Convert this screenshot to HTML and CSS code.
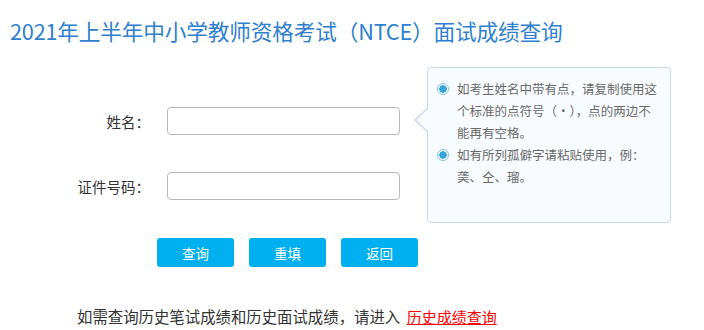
FILE: index.html
```html
<!DOCTYPE html>
<html lang="zh-CN">
<head>
<meta charset="utf-8">
<title>2021年上半年中小学教师资格考试（NTCE）面试成绩查询</title>
<link rel="stylesheet" href="styles.css">
</head>
<body>
<h1 class="title">2021年上半年中小学教师资格考试（NTCE）面试成绩查询</h1>
<div class="content">
  <div class="form">
    <div class="row">
      <label class="label">姓名：</label>
      <input class="field" type="text">
    </div>
    <div class="row">
      <label class="label">证件号码：</label>
      <input class="field" type="text">
    </div>
  </div>
  <div class="tip">
    <div class="tip-item"><span class="dot"></span><p class="tip-text">如考生姓名中带有点，请复制使用这个标准的点符号（·），点的两边不能再有空格。</p></div>
    <div class="tip-item"><span class="dot"></span><p class="tip-text">如有所列孤僻字请粘贴使用，例：䶮、仝、瑠。</p></div>
  </div>
</div>
<div class="buttons">
  <button class="btn" type="button">查询</button>
  <button class="btn" type="button">重填</button>
  <button class="btn" type="button">返回</button>
</div>
<p class="history">如需查询历史笔试成绩和历史面试成绩，请进入 <a class="history-link" href="#">历史成绩查询</a></p>
</body>
</html>
```
FILE: styles.css
```css
html, body {
  margin: 0;
  padding: 0;
  background: #ffffff;
}
body {
  font-family: "Noto Sans CJK SC", "Noto Sans", sans-serif;
  color: #333333;
}
.title {
  margin: 16px 0 0 10px;
  font-size: 21.7px;
  line-height: 30px;
  font-weight: normal;
  color: #2e7fd0;
  letter-spacing: -0.2px;
}
.content {
  display: flex;
  align-items: flex-start;
  margin-top: 21px;
}
.form {
  display: flex;
  flex-direction: column;
  gap: 37px;
  padding-top: 40px;
  width: 400px;
}
.row {
  display: flex;
  align-items: center;
}
.label {
  width: 150px;
  text-align: right;
  font-size: 14.5px;
  color: #333333;
  margin-right: 17px;
}
.field {
  box-sizing: border-box;
  width: 233px;
  height: 28px;
  margin: 0;
  border: 1px solid #b9b9b9;
  border-radius: 4px;
  background: #ffffff;
  padding: 0 6px;
  outline: none;
}
.tip {
  position: relative;
  box-sizing: border-box;
  margin-left: 27px;
  width: 244px;
  height: 156px;
  padding: 10px 7px 0 9px;
  border: 1px solid #c8d8ec;
  border-radius: 4px;
  background: #f8fbff;
}
.tip::before {
  content: "";
  position: absolute;
  left: -14px;
  top: 39px;
  border-style: solid;
  border-width: 13px 14px 13px 0;
  border-color: transparent #c8d8ec transparent transparent;
}
.tip::after {
  content: "";
  position: absolute;
  left: -12px;
  top: 40px;
  border-style: solid;
  border-width: 12px 13px 12px 0;
  border-color: transparent #f8fbff transparent transparent;
}
.tip-item {
  display: flex;
  align-items: flex-start;
}
.dot {
  flex: none;
  box-sizing: border-box;
  width: 12px;
  height: 12px;
  margin: 5px 8px 0 0;
  border-radius: 50%;
  border: 1px solid #7cc2e6;
  background: radial-gradient(circle, #3aa5dc 0 3.5px, #ffffff 4px);
}
.tip-text {
  margin: 0;
  width: 205px;
  font-size: 12.5px;
  line-height: 22px;
  color: #6a6a6a;
}
.buttons {
  display: flex;
  gap: 15px;
  margin: 15px 0 0 157px;
}
.btn {
  width: 77px;
  height: 29px;
  margin: 0;
  padding: 0;
  border: none;
  border-radius: 3px;
  background: #00aff0;
  color: #ffffff;
  font-family: "Noto Sans CJK SC", sans-serif;
  font-size: 13.5px;
  cursor: pointer;
}
.history {
  margin: 39px 0 0 77px;
  font-size: 15.4px;
  line-height: 20px;
  color: #333333;
}
.history-link {
  margin-left: 3px;
  font-size: 15px;
  color: #ff0000;
  text-decoration: underline;
}
```
